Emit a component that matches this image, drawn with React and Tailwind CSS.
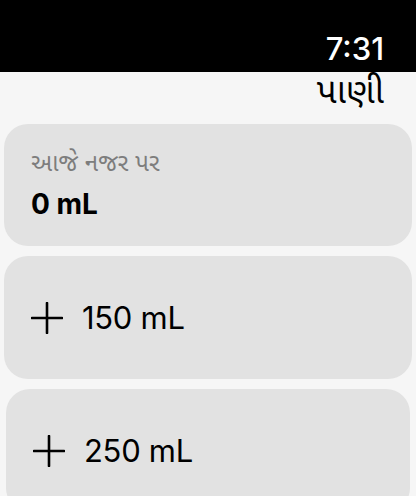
const font = { fontFamily: 'Inter, "Noto Sans", "Noto Sans Gujarati", sans-serif' };

function PlusIcon() {
  return (
    <svg width="32" height="32" viewBox="0 0 32 32" className="shrink-0">
      <path d="M1 16h30M16 1v30" stroke="black" strokeWidth="2.6" strokeLinecap="round" fill="none" />
    </svg>
  );
}

function AddCard({ amount, inset }) {
  return (
    <div
      className={`h-[123px] shrink-0 rounded-[24px] bg-[#e2e2e2] flex items-center gap-[19px] ${
        inset ? 'mx-[6px] pl-[27px]' : 'mx-[4px] pl-[27px]'
      }`}
    >
      <PlusIcon />
      <span className="text-[31px] leading-none text-black tracking-[-0.3px]">{amount} mL</span>
    </div>
  );
}

export default function App() {
  return (
    <div className="w-[416px] h-[496px] overflow-hidden bg-[#f6f6f6] flex flex-col" style={font}>
      <div className="h-[72px] shrink-0 bg-black flex items-end justify-end pr-[32px] pb-[8px]">
        <span className="text-white text-[31px] leading-none font-medium">7:31</span>
      </div>
      <div className="h-[52px] shrink-0 flex justify-end pr-[32px]">
        <span className="text-black text-[35px] leading-[36px]">પાણી</span>
      </div>
      <div className="flex flex-col gap-[10px]">
        <div className="mx-[4px] h-[122px] shrink-0 rounded-[24px] bg-[#e2e2e2] px-[27px] pt-[24px]">
          <div className="text-[#7d7d7d] text-[24px] leading-[30px]">આજે નજર પર</div>
          <div className="mt-[10px] text-black text-[28px] leading-[32px] font-bold">0 mL</div>
        </div>
        <AddCard amount="150" />
        <AddCard amount="250" inset />
      </div>
    </div>
  );
}
